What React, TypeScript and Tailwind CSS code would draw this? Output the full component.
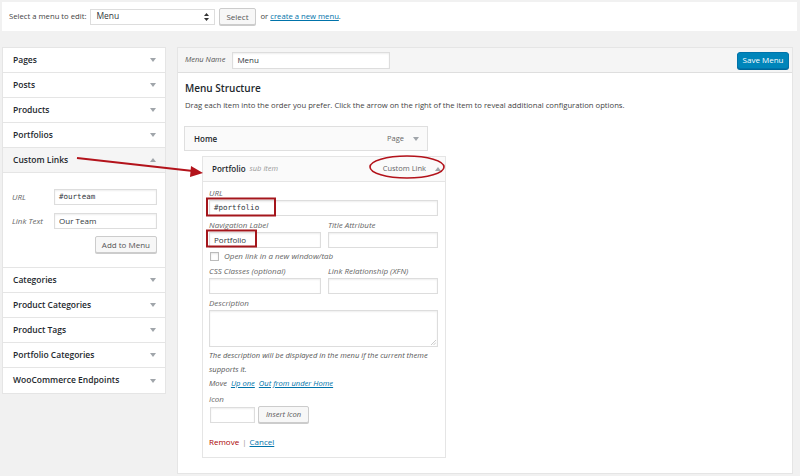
import React from "react";

const Tri = ({ up = false }: { up?: boolean }) => (
  <svg width="6" height="4" viewBox="0 0 6 4" className="shrink-0">
    {up ? <polygon points="0,4 6,4 3,0" fill="#a0a5aa" /> : <polygon points="0,0 6,0 3,4" fill="#a0a5aa" />}
  </svg>
);

const SideRow = ({ title, open = false }: { title: string; open?: boolean }) => (
  <div className={`h-[25px] flex items-center justify-between pl-[10px] pr-[9px] border-b border-[#e5e5e5] ${open ? "bg-[#f5f5f5]" : "bg-white"}`}>
    <span className="text-[8.5px] font-semibold text-[#23282d]">{title}</span>
    <Tri up={open} />
  </div>
);

const Input = ({ w, value, mono = false, cls = "" }: { w: string; value?: string; mono?: boolean; cls?: string }) => (
  <div className={`${w} h-[16px] bg-white border border-[#ddd] shadow-[inset_0_1px_2px_rgba(0,0,0,0.07)] flex items-center px-[4px] text-[8px] text-[#32373c] ${cls}`}
    style={mono ? { fontFamily: "'DejaVu Sans Mono', 'Liberation Mono', monospace", fontSize: "7.5px" } : undefined}>
    {value}
  </div>
);

const Label = ({ children }: { children: React.ReactNode }) => (
  <div className="text-[8px] italic text-[#666] leading-[12px]">{children}</div>
);

export default function App() {
  return (
    <div className="relative w-[800px] h-[476px] overflow-hidden bg-[#f1f1f1] text-[#444]" style={{ fontFamily: "'Open Sans', 'Noto Sans', sans-serif" }}>
      {/* top bar */}
      <div className="mt-[2px] ml-[2px] mr-[3px] h-[29px] bg-white flex items-center pl-[7px] text-[7.7px] text-[#444]">
        <span>Select a menu to edit:</span>
        <div className="ml-[4px] w-[125px] h-[16px] border border-[#ddd] bg-white flex items-center justify-between px-[5px] text-[8.5px] text-[#32373c]">
          <span>Menu</span>
          <svg width="5" height="8" viewBox="0 0 5 8"><polygon points="0,3 5,3 2.5,0" fill="#333" /><polygon points="0,5 5,5 2.5,8" fill="#333" /></svg>
        </div>
        <div className="ml-[4px] h-[17px] px-[6px] border border-[#ccc] bg-[#f7f7f7] rounded-[2px] flex items-center text-[8px] text-[#555] shadow-[0_1px_0_#ccc]">Select</div>
        <span className="ml-[5px]">or <span className="text-[#0073aa] underline">create a new menu</span>.</span>
      </div>

      <div className="flex mt-[16px]">
        {/* sidebar */}
        <div className="ml-[2px] w-[164px] border border-[#e5e5e5] bg-white self-start">
          <SideRow title="Pages" />
          <SideRow title="Posts" />
          <SideRow title="Products" />
          <SideRow title="Portfolios" />
          <SideRow title="Custom Links" open />
          <div className="h-[95px] border-b border-[#e5e5e5] pl-[9px] pr-[8px] pt-[16px]">
            <div className="flex items-center">
              <span className="w-[43px] text-[8px] italic text-[#666]">URL</span>
              <Input w="w-[105px]" value="#ourteam" mono />
            </div>
            <div className="flex items-center mt-[8px]">
              <span className="w-[43px] text-[8px] italic text-[#666]">Link Text</span>
              <Input w="w-[105px]" value="Our Team" />
            </div>
            <div className="flex justify-end mt-[7px]">
              <div className="h-[17px] px-[6px] border border-[#ccc] bg-[#f7f7f7] rounded-[2px] flex items-center text-[8px] text-[#555] shadow-[0_1px_0_#ccc]">Add to Menu</div>
            </div>
          </div>
          <SideRow title="Categories" />
          <SideRow title="Product Categories" />
          <SideRow title="Product Tags" />
          <SideRow title="Portfolio Categories" />
          <div className="[&>div]:border-b-0"><SideRow title="WooCommerce Endpoints" /></div>
        </div>

        {/* main */}
        <div className="ml-[11px] w-[616px] h-[427px] border border-[#e5e5e5] bg-white flex flex-col">
          <div className="h-[25px] bg-[#f5f5f5] border-b border-[#dedede] flex items-center justify-between pl-[7px] pr-[3px]">
            <div className="flex items-center">
              <span className="text-[7.5px] italic text-[#555]">Menu Name</span>
              <Input w="w-[158px]" value="Menu" cls="ml-[7px] h-[17px]" />
            </div>
            <div className="h-[17px] w-[52px] rounded-[3px] bg-[#0085ba] border border-[#0073aa] flex items-center justify-center text-[8px] text-white shadow-[0_1px_0_#006799]">Save Menu</div>
          </div>
          <div className="pl-[6px] pt-[7px]">
            <div className="pl-[1px] text-[10px] font-semibold text-[#23282d] leading-[16px]">Menu Structure</div>
            <div className="pl-[1px] mt-[2px] text-[7.7px] text-[#444] leading-[14px]">Drag each item into the order you prefer. Click the arrow on the right of the item to reveal additional configuration options.</div>

            <div className="mt-[14px] w-[244px] h-[25px] border border-[#dfdfdf] bg-[#fafafa] flex items-center justify-between pl-[9px] pr-[8px]">
              <span className="text-[8px] font-semibold text-[#23282d]">Home</span>
              <div className="flex items-center gap-[9px]">
                <span className="text-[7.5px] text-[#666]">Page</span>
                <Tri />
              </div>
            </div>

            <div className="mt-[5px] ml-[18px] w-[244px] border border-[#e5e5e5] bg-white">
              <div className="h-[25px] bg-[#fafafa] border-b border-[#e5e5e5] flex items-center justify-between pl-[9px] pr-[4px]">
                <div className="flex items-center gap-[4px]">
                  <span className="text-[8px] font-semibold text-[#23282d]">Portfolio</span>
                  <span className="text-[7.5px] italic text-[#999]">sub item</span>
                </div>
                <div className="flex items-center gap-[9px]">
                  <span className="text-[7.5px] text-[#666]">Custom Link</span>
                  <Tri up />
                </div>
              </div>
              <div className="pl-[6px] pr-[7px] pt-[5px] pb-[9px]">
                <Label>URL</Label>
                <Input w="w-full" value="#portfolio" mono cls="mt-[1px]" />
                <div className="flex gap-[7px] mt-[3px]">
                  <div className="w-[112px]">
                    <Label>Navigation Label</Label>
                    <Input w="w-full" value="Portfolio" cls="mt-[1px]" />
                  </div>
                  <div className="flex-1">
                    <Label>Title Attribute</Label>
                    <Input w="w-full" cls="mt-[1px]" />
                  </div>
                </div>
                <div className="flex items-center mt-[3px] h-[10px]">
                  <div className="w-[9px] h-[9px] ml-[1px] border border-[#bbb] bg-white shadow-[inset_0_1px_2px_rgba(0,0,0,0.1)]" />
                  <span className="ml-[5px] text-[8px] italic text-[#666]">Open link in a new window/tab</span>
                </div>
                <div className="flex gap-[7px] mt-[4px]">
                  <div className="w-[112px]">
                    <Label>CSS Classes (optional)</Label>
                    <Input w="w-full" cls="mt-[1px]" />
                  </div>
                  <div className="flex-1">
                    <Label>Link Relationship (XFN)</Label>
                    <Input w="w-full" cls="mt-[1px]" />
                  </div>
                </div>
                <div className="mt-[3px]"><Label>Description</Label></div>
                <div className="relative mt-[1px] w-full h-[37px] border border-[#ddd] shadow-[inset_0_1px_2px_rgba(0,0,0,0.07)]">
                  <svg className="absolute right-[1px] bottom-[1px]" width="5" height="5" viewBox="0 0 5 5"><line x1="0" y1="5" x2="5" y2="0" stroke="#aaa" strokeWidth="0.6" /><line x1="2.5" y1="5" x2="5" y2="2.5" stroke="#aaa" strokeWidth="0.6" /></svg>
                </div>
                <div className="mt-[1px] text-[7.6px] italic text-[#555] leading-[14px]">The description will be displayed in the menu if the current theme supports it.</div>
                <div className="text-[7.6px] italic text-[#555] leading-[14px]">Move <span className="ml-[2px] text-[#0073aa] underline">Up one</span> <span className="ml-[2px] text-[#0073aa] underline">Out from under Home</span></div>
                <div className="mt-[3px]"><Label>Icon</Label></div>
                <div className="flex items-center mt-[1px]">
                  <Input w="w-[45px] ml-[1px]" />
                  <div className="ml-[3px] h-[17px] px-[7px] border border-[#ccc] bg-[#f7f7f7] rounded-[2px] flex items-center text-[7.6px] italic text-[#555] shadow-[0_1px_0_#ccc]">Insert Icon</div>
                </div>
                <div className="mt-[13px] text-[8px] leading-[12px]">
                  <span className="text-[#a00]">Remove</span>
                  <span className="text-[#999] mx-[3px]">|</span>
                  <span className="text-[#0073aa] underline">Cancel</span>
                </div>
              </div>
            </div>
          </div>
        </div>
      </div>

      {/* annotations */}
      <svg className="absolute left-0 top-0 pointer-events-none" width="800" height="476">
        <line x1="77" y1="158" x2="193" y2="171" stroke="#b3131b" strokeWidth="2.2" />
        <polygon points="203,173 191,166 190,177" fill="#b3131b" />
        <ellipse cx="407" cy="167" rx="37" ry="11" fill="none" stroke="#b3131b" strokeWidth="1.6" />
        <rect x="207" y="198.5" width="68" height="17" fill="none" stroke="#a4161c" strokeWidth="2" />
        <rect x="207" y="230.5" width="49" height="16" fill="none" stroke="#a4161c" strokeWidth="2" />
      </svg>
    </div>
  );
}
